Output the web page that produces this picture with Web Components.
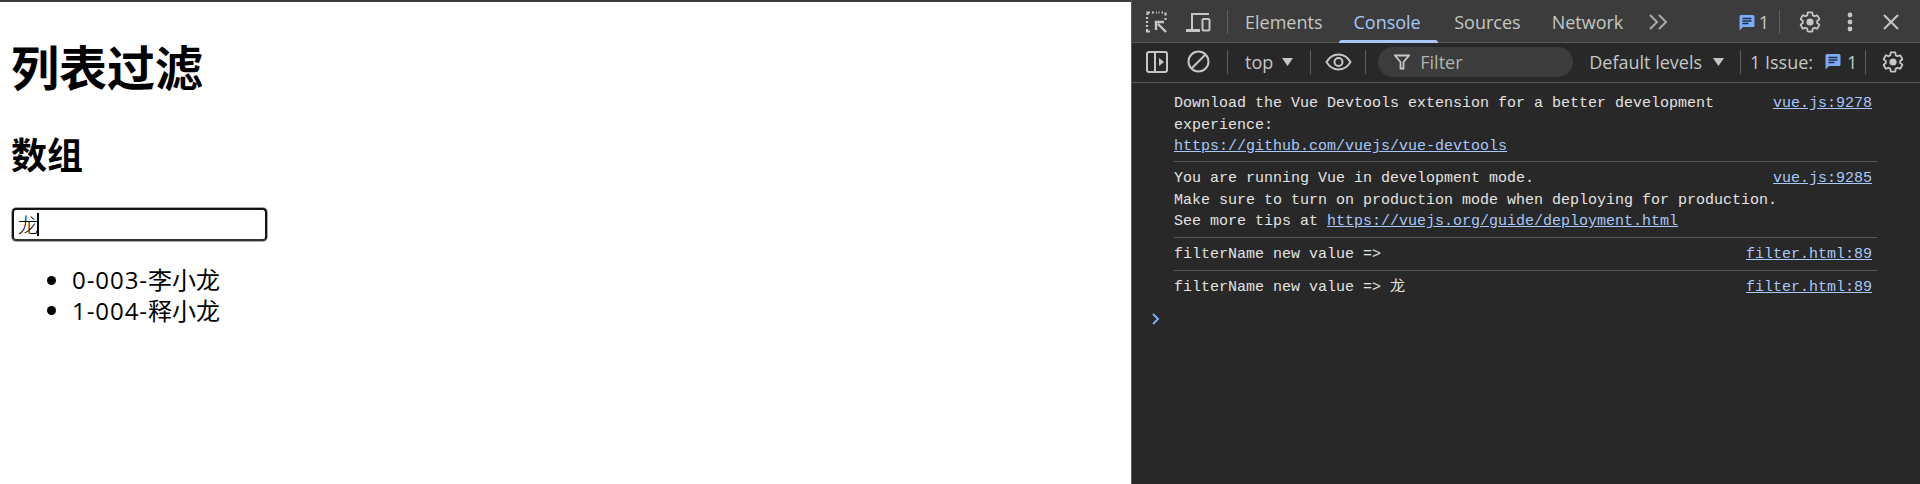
<!DOCTYPE html>
<html lang="zh">
<head>
<meta charset="utf-8">
<title>列表过滤</title>
<style>
  html, body { margin: 0; height: 100%; overflow: hidden; background: #fff; }
  body { display: flex; height: 484px; }
</style>
</head>
<body>
<filter-page>
  <h1 slot="title">列表过滤</h1>
  <h2 slot="subtitle">数组</h2>
  <list-item><span>0-003-</span>李小龙</list-item>
  <list-item><span>1-004-</span>释小龙</list-item>
</filter-page>
<devtools-panel>
  <console-row source="vue.js:9278" first>Download the Vue Devtools extension for a better development experience:<br><a>https://github.com/vuejs/vue-devtools</a></console-row>
  <console-row source="vue.js:9285">You are running Vue in development mode.<br>Make sure to turn on production mode when deploying for production.<br>See more tips at <a>https://vuejs.org/guide/deployment.html</a></console-row>
  <console-row source="filter.html:89">filterName new value =&gt; </console-row>
  <console-row source="filter.html:89" last>filterName new value =&gt; 龙</console-row>
</devtools-panel>

<script>
const ICONS = {
  inspect: '<svg viewBox="0 0 22 22" width="22" height="22" fill="none" stroke="#c4c7c5"><path d="M9 1.5h-2M5 1.5h-2.5v2.5M2 6v2M2 10v2M2 14v2M2 18v2.500h3M12 1.500h-1M14.500 1.500h-1M18 1.500h-1.500M20.500 1.500v3M20.500 7v2" stroke-width="2.200"/><path d="M21 21l-8-8M11 19v-8h8" stroke-width="2.400"/></svg>',
  device: '<svg viewBox="0 0 25 22" width="25" height="22" fill="none" stroke="#c4c7c5" stroke-width="2"><path d="M6 18V3h17"/><path d="M0 19.500h14" stroke-width="3"/><rect x="16.500" y="8" width="7" height="11.500" rx="1"/></svg>',
  dock: '<svg viewBox="0 0 22 22" width="22" height="22" fill="none" stroke="#c4c7c5" stroke-width="2"><rect x="1" y="1" width="20" height="20" rx="2"/><path d="M9 1v20"/><path d="M13 7l5 4-5 4z" fill="#c4c7c5" stroke="none"/></svg>',
  block: '<svg viewBox="0 0 23 23" width="23" height="23" fill="none" stroke="#c4c7c5" stroke-width="2"><circle cx="11.500" cy="11.500" r="10"/><path d="M5 18L18 5"/></svg>',
  eye: '<svg viewBox="0 0 27 18" width="27" height="18" fill="none" stroke="#c4c7c5" stroke-width="2"><path d="M1.500 9C4.500 4 8.500 1.500 13.500 1.500S22.500 4 25.500 9C22.500 14 18.500 16.500 13.500 16.500S4.500 14 1.500 9z"/><circle cx="13.500" cy="9" r="4"/></svg>',
  funnel: '<svg viewBox="0 0 16 16" width="16" height="16" fill="none" stroke="#c4c7c5" stroke-width="1.800"><path d="M1 1.500h14L9.500 8v6.500h-3V8z"/></svg>',
  more: '<svg viewBox="0 0 19 16" width="19" height="16" fill="none" stroke="#a8abaa" stroke-width="2"><path d="M1 1l7 7-7 7M10 1l7 7-7 7"/></svg>',
  chat: '<svg viewBox="0 0 16 17" width="16" height="17"><path d="M2 1h12a1.500 1.500 0 0 1 1.500 1.500v9A1.500 1.500 0 0 1 14 13H4l-3.500 3.500V2.500A1.500 1.500 0 0 1 2 1z" fill="#7cacf8"/><path d="M3.500 4.500h9M3.500 7h9M3.500 9.500h6" stroke="#1f2f4a" stroke-width="1.300"/></svg>',
  gear: '<svg viewBox="0 0 24 24" width="24" height="24"><path d="M19.140 12.940c.04-.3.060-.61.060-.94 0-.32-.02-.64-.07-.94l2.030-1.580c.18-.14.23-.41.12-.61l-1.920-3.320c-.12-.22-.37-.29-.59-.22l-2.390.96c-.5-.38-1.030-.7-1.620-.94l-.36-2.540c-.04-.24-.24-.41-.48-.41h-3.840c-.24 0-.43.17-.47.41l-.36 2.540c-.59.24-1.130.57-1.620.94l-2.390-.96c-.22-.08-.47 0-.59.22L2.740 8.870c-.12.21-.08.47.12.61l2.030 1.580c-.05.3-.09.63-.09.94s.02.64.07.94l-2.030 1.580c-.18.14-.23.41-.12.61l1.920 3.320c.12.22.37.29.59.22l2.390-.96c.5.38 1.030.7 1.620.94l.36 2.540c.05.24.24.41.48.41h3.840c.24 0 .44-.17.47-.41l.36-2.540c.59-.24 1.130-.56 1.620-.94l2.390.96c.22.08.47 0 .59-.22l1.920-3.320c.12-.22.07-.47-.12-.61l-2.010-1.580z" fill="none" stroke="#c4c7c5" stroke-width="1.800"/><circle cx="12" cy="12" r="3.600" fill="#c4c7c5"/></svg>',
  dots: '<svg viewBox="0 0 6 22" width="6" height="22" fill="#c4c7c5"><circle cx="3" cy="4" r="2.400"/><circle cx="3" cy="11" r="2.400"/><circle cx="3" cy="18" r="2.400"/></svg>',
  close: '<svg viewBox="0 0 16 16" width="16" height="16" fill="none" stroke="#c4c7c5" stroke-width="2"><path d="M1 1l14 14M15 1L1 15"/></svg>',
  caret: '<svg viewBox="0 0 11 8" width="11" height="8" fill="#c4c7c5"><path d="M0 0h11L5.500 8z"/></svg>',
  prompt: '<svg viewBox="0 0 8 12" width="8" height="12" fill="none" stroke="#7cacf8" stroke-width="2"><path d="M1 1l5 5-5 5"/></svg>'
};

class DtIcon extends HTMLElement {
  connectedCallback() {
    this.attachShadow({ mode: 'open' });
    this.shadowRoot.innerHTML = `<style>:host { display: inline-flex; flex: none; align-items: center; justify-content: center; }</style>${ICONS[this.getAttribute('name')]}`;
  }
}
customElements.define('dt-icon', DtIcon);

class ListItem extends HTMLElement {
  connectedCallback() {
    this.attachShadow({ mode: 'open' });
    this.shadowRoot.innerHTML = `
      <style>
        :host { display: flex; align-items: center; height: 30.500px; line-height: 30.500px; }
        ::slotted(span) { letter-spacing: .95px; }
        .dot { width: 9px; height: 9px; border-radius: 50%; background: #000; margin: 0 16px 0 -25px; flex: none; }
      </style>
      <span class="dot"></span><slot></slot>`;
  }
}
customElements.define('list-item', ListItem);

class FilterPage extends HTMLElement {
  connectedCallback() {
    this.attachShadow({ mode: 'open' });
    this.shadowRoot.innerHTML = `
      <style>
        :host {
          display: block;
          flex: none;
          width: 1131px;
          box-sizing: border-box;
          border-top: 2px solid #3c3c3c;
          padding: 0 12px;
          color: #000;
          font-family: "Open Sans", "Noto Sans CJK SC", sans-serif;
          font-size: 24px;
        }
        ::slotted(h1) { font-size: 48px; font-weight: 700; line-height: 64px; margin: 34px 0 0 -1px; }
        ::slotted(h2) { font-size: 36px; font-weight: 700; line-height: 48px; margin: 32px 0 0 -1px; }
        .input {
          box-sizing: border-box;
          width: 255px;
          height: 33px;
          margin-top: 28px;
          padding: 0 4px;
          border: 2px solid #141414;
          border-bottom-color: #333;
          border-radius: 4px;
          box-shadow: 0 0 0 .5px #555;
          display: flex;
          align-items: center;
          font-size: 20px;
          font-weight: 300;
        }
        .cursor { width: 1.500px; height: 23px; background: #000; margin-left: -1px; }
        ul { display: block; margin: 24px 0 0; padding: 0 0 0 60px; }
      </style>
      <slot name="title"></slot>
      <slot name="subtitle"></slot>
      <div class="input"><span>龙</span><span class="cursor"></span></div>
      <ul><slot></slot></ul>`;
  }
}
customElements.define('filter-page', FilterPage);

class ConsoleRow extends HTMLElement {
  connectedCallback() {
    this.attachShadow({ mode: 'open' });
    const last = this.hasAttribute('last');
    const first = this.hasAttribute('first');
    this.shadowRoot.innerHTML = `
      <style>
        :host {
          display: flex;
          justify-content: space-between;
          margin: 0 43px 0 42px;
          padding: ${first ? '10px' : '6px'} 5px ${first ? '3px' : '4px'} 0;
          border-bottom: 1px solid ${last ? 'transparent' : '#5a5a5a'};
          color: #e3e3e3;
          font-family: "Liberation Mono", "Noto Sans CJK SC", monospace;
          font-size: 15px;
          line-height: 21.670px;
        }
        .msg { flex: 1; min-width: 0; margin-right: -5px; }
        .src { flex: none; color: #a8c7fa; text-decoration: underline; }
        ::slotted(a) { color: #a8c7fa; text-decoration: underline; }
      </style>
      <div class="msg"><slot></slot></div>
      <div class="src">${this.getAttribute('source')}</div>`;
  }
}
customElements.define('console-row', ConsoleRow);

class DevtoolsPanel extends HTMLElement {
  connectedCallback() {
    this.attachShadow({ mode: 'open' });
    this.shadowRoot.innerHTML = `
      <style>
        :host {
          display: flex;
          flex-direction: column;
          flex: 1;
          min-width: 0;
          background: #282828;
          border-left: 1px solid #5a5a5a;
          font-family: "Open Sans", "Noto Sans", sans-serif;
          font-size: 18px;
          color: #c4c7c5;
        }
        .bar { display: flex; align-items: center; flex: none; box-sizing: border-box; border-bottom: 1px solid #5a5a5a; }
        .tabs { height: 43px; background: #3c3c3c; padding: 2px 0 0 13px; }
        .tools { height: 40px; background: #282828; padding: 0 0 2px 14px; }
        .sep { width: 1px; height: 24px; background: #5e5e5e; flex: none; }
        .tab { display: flex; align-items: center; height: 100%; position: relative; }
        .tab.on { color: #a8c7fa; }
        .tab.on::after {
          content: "";
          position: absolute;
          left: -14px;
          right: -17px;
          bottom: -1px;
          height: 3px;
          border-radius: 3px 3px 0 0;
          background: #a8c7fa;
        }
        .pill {
          width: 195px;
          height: 30px;
          border-radius: 15px;
          background: #3c3c3c;
          display: flex;
          align-items: center;
          padding-left: 16px;
          box-sizing: border-box;
          margin-left: 12px;
          color: #b0b3b1;
        }
        .log { flex: 1; }
        .prompt { margin: 3px 0 0 20px; display: block; width: 8px; }
      </style>
      <div class="bar tabs">
        <dt-icon name="inspect"></dt-icon>
        <dt-icon name="device" style="margin-left:19px"></dt-icon>
        <span class="sep" style="margin-left:16px"></span>
        <span class="tab" style="margin-left:17px">Elements</span>
        <span class="tab on" style="margin-left:31px">Console</span>
        <span class="tab" style="margin-left:33.500px">Sources</span>
        <span class="tab" style="margin-left:31px">Network</span>
        <dt-icon name="more" style="margin-left:25.500px"></dt-icon>
        <dt-icon name="chat" style="margin-left:71px"></dt-icon>
        <span style="margin-left:4px">1</span>
        <span class="sep" style="margin-left:10px"></span>
        <dt-icon name="gear" style="margin-left:18px"></dt-icon>
        <dt-icon name="dots" style="margin-left:25px"></dt-icon>
        <dt-icon name="close" style="margin-left:30px"></dt-icon>
      </div>
      <div class="bar tools">
        <dt-icon name="dock"></dt-icon>
        <dt-icon name="block" style="margin-left:19px"></dt-icon>
        <span class="sep" style="margin-left:17px"></span>
        <span style="margin-left:17px">top</span>
        <dt-icon name="caret" style="margin-left:9px"></dt-icon>
        <span class="sep" style="margin-left:17px"></span>
        <dt-icon name="eye" style="margin-left:14px"></dt-icon>
        <span class="sep" style="margin-left:13px"></span>
        <div class="pill"><dt-icon name="funnel"></dt-icon><span style="margin-left:10px">Filter</span></div>
        <span style="margin-left:16px">Default levels</span>
        <dt-icon name="caret" style="margin-left:11px"></dt-icon>
        <span class="sep" style="margin-left:16px"></span>
        <span style="margin-left:9px">1 Issue:</span>
        <dt-icon name="chat" style="margin-left:12px"></dt-icon>
        <span style="margin-left:6px">1</span>
        <span class="sep" style="margin-left:8px"></span>
        <dt-icon name="gear" style="margin-left:14.500px"></dt-icon>
      </div>
      <div class="log">
        <slot></slot>
        <dt-icon class="prompt" name="prompt"></dt-icon>
      </div>`;
  }
}
customElements.define('devtools-panel', DevtoolsPanel);
</script>
</body>
</html>
